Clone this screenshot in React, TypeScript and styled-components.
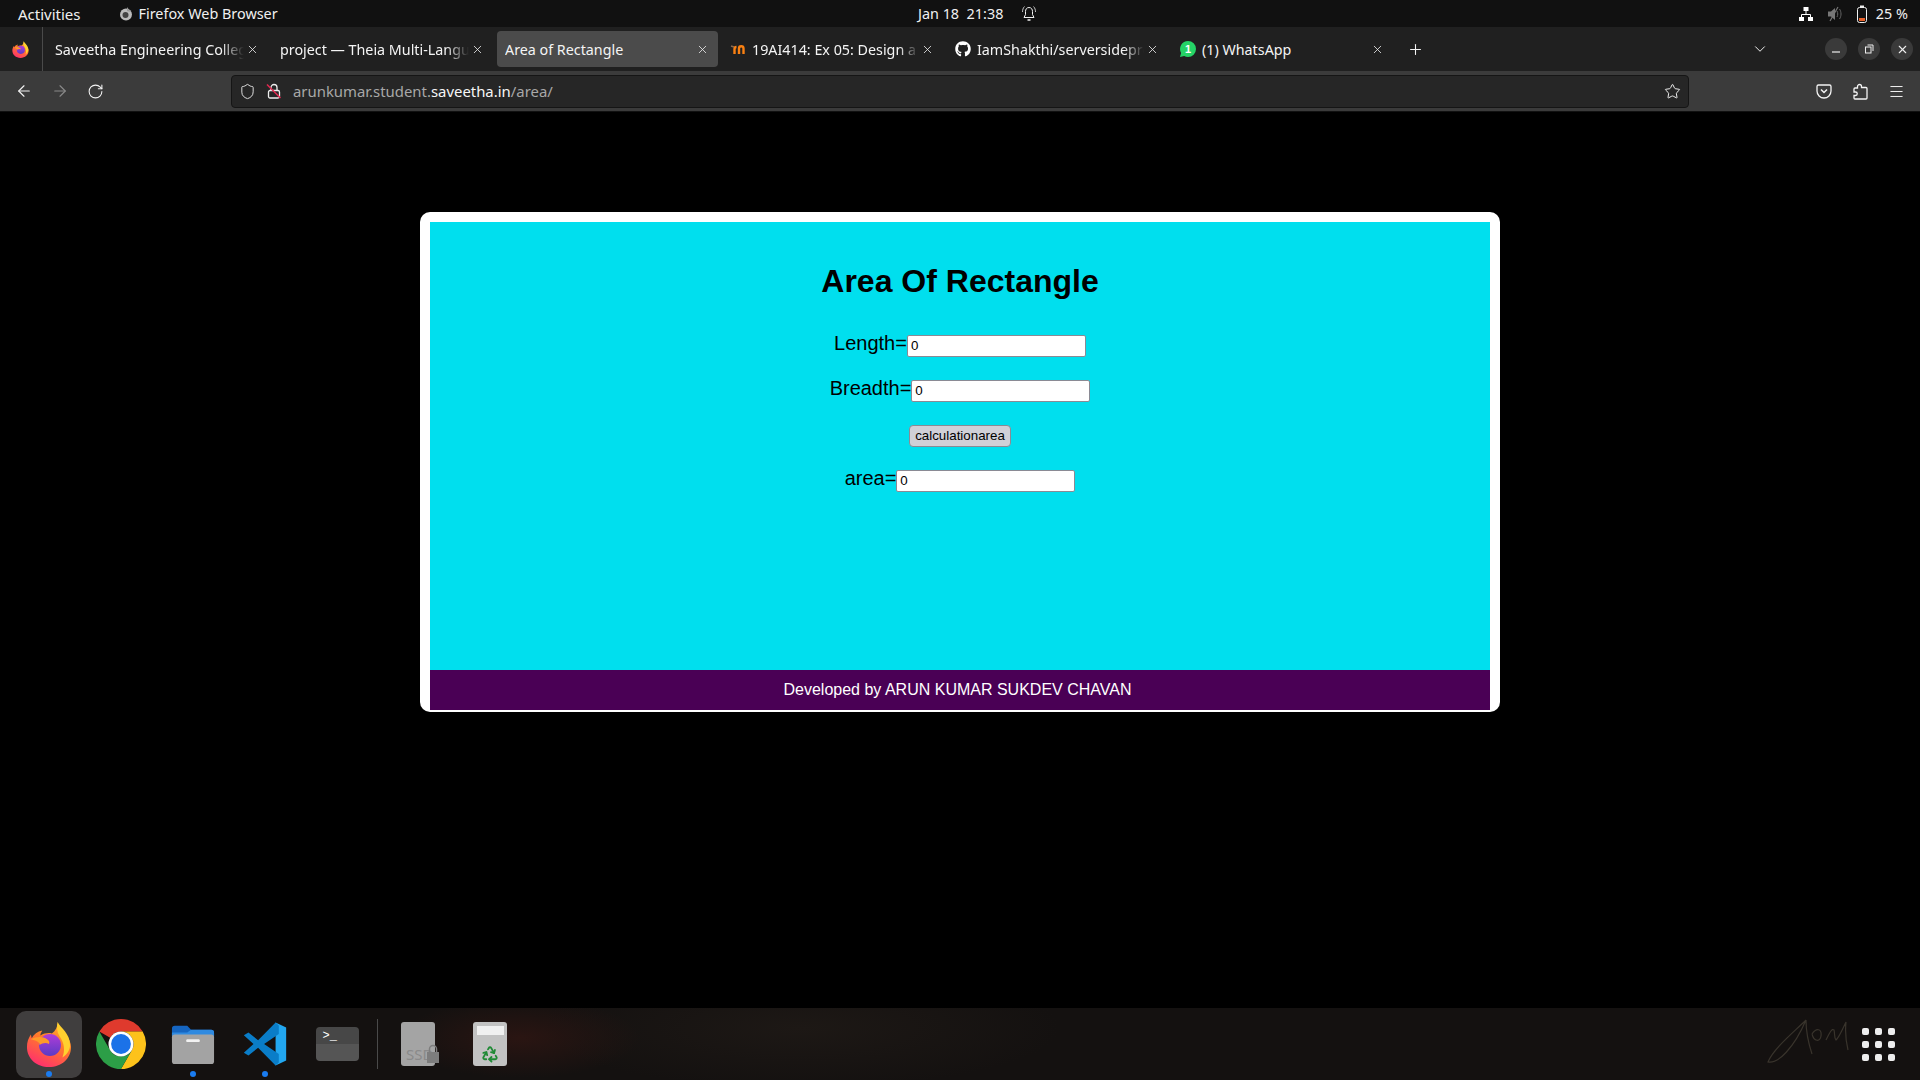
import { createGlobalStyle, styled } from 'styled-components';
import { ArrowLeft, ArrowRight, ChevronDown, Menu, Plus, Recycle, RotateCw, Shield, Star, X } from 'lucide-react';
import { FaGithub } from 'react-icons/fa';

const GlobalStyle = createGlobalStyle`
  html, body {
    margin: 0;
    padding: 0;
    background: #000;
  }
  * {
    box-sizing: border-box;
  }
`;

const uiFont = `"Noto Sans", "Open Sans", sans-serif`;

const Screen = styled.div`
  width: 1920px;
  height: 1080px;
  display: flex;
  flex-direction: column;
  overflow: hidden;
  background: #000;
  font-family: ${uiFont};
`;

/* gnome top bar */
const TopBar = styled.div`
  height: 27px;
  flex: none;
  display: flex;
  align-items: center;
  background: #111;
  color: #f0f0f0;
  font-size: 14.4px;
  padding-left: 18px;
  padding-right: 12px;
`;

const BarLeft = styled.div`
  width: 900px;
  display: flex;
  align-items: center;
`;

const Activities = styled.span`
  font-size: 15px;
`;

const AppName = styled.div`
  display: flex;
  align-items: center;
  gap: 6px;
  margin-left: 38px;
`;

const Clock = styled.div`
  display: flex;
  align-items: center;
  gap: 18px;
  white-space: pre;
`;

const BarRight = styled.div`
  margin-left: auto;
  display: flex;
  align-items: center;
  gap: 13px;
`;

const BatteryLabel = styled.span`
  margin-left: -5px;
`;

/* firefox chrome */
const TabStrip = styled.div`
  height: 44px;
  flex: none;
  display: flex;
  align-items: center;
  background: #202020;
  color: #f4f4f4;
  font-size: 14.3px;
`;

const AppMenu = styled.div`
  width: 43px;
  height: 100%;
  flex: none;
  display: flex;
  align-items: center;
  padding-left: 12px;
  border-right: 1px solid #4a4a4a;
`;

const TabItem = styled.div<{ $active?: boolean }>`
  width: ${props => (props.$active ? '221px' : '225px')};
  height: 36px;
  flex: none;
  display: flex;
  align-items: center;
  gap: 6px;
  padding: 0 9px 0 ${props => (props.$active ? '8px' : '12px')};
  margin-left: ${props => (props.$active ? '4px' : '0')};
  border-radius: 4px;
  background: ${props => (props.$active ? '#4b4b4b' : 'transparent')};
`;

const TabTitle = styled.span<{ $fade?: boolean }>`
  flex: 1;
  min-width: 0;
  white-space: nowrap;
  overflow: hidden;
  margin-right: -4px;
  ${props => props.$fade && 'mask-image: linear-gradient(to right, #000 88%, transparent);'}
`;

const NewTab = styled.div`
  margin-left: 14px;
  display: flex;
  align-items: center;
`;

const TabTools = styled.div`
  margin-left: auto;
  display: flex;
  align-items: center;
  padding-right: 7px;
`;

const ListTabs = styled.div`
  margin-right: 45px;
  display: flex;
`;

const WinButton = styled.div`
  width: 22px;
  height: 22px;
  margin-left: 11px;
  border-radius: 50%;
  background: #3a3a3a;
  display: flex;
  align-items: center;
  justify-content: center;
`;

const NavBar = styled.div`
  height: 41px;
  flex: none;
  display: flex;
  align-items: center;
  background: #3b3b3b;
  border-bottom: 1px solid #111;
  color: #f4f4f4;
  padding-left: 15px;
  padding-right: 15px;
`;

const NavIcons = styled.div`
  width: 216px;
  display: flex;
  align-items: center;
  gap: 18px;
`;

const UrlBar = styled.div`
  width: 1458px;
  height: 33px;
  display: flex;
  align-items: center;
  gap: 10px;
  padding: 0 7px;
  border: 1px solid #151515;
  border-radius: 4px;
  background: #262626;
  font-size: 14.9px;
  color: #a8a8a8;
`;

const UrlText = styled.div`
  flex: 1;
  margin-left: 1px;
`;

const UrlHost = styled.span`
  color: #f6f6f6;
`;

const NavRight = styled.div`
  margin-left: auto;
  display: flex;
  align-items: center;
  gap: 20px;
`;

/* page */
const Viewport = styled.div`
  flex: 1;
  background: #000;
  padding-top: 100px;
`;

const Card = styled.div`
  width: 1080px;
  height: 500px;
  margin-left: 420px;
  padding: 10px 10px 2px;
  background: #fff;
  border-radius: 10px;
  display: flex;
  flex-direction: column;
  font-family: "Liberation Sans", Arial, sans-serif;
`;

const Content = styled.div`
  flex: 1;
  background: #00dfee;
  color: #000;
  text-align: center;
`;

const Heading = styled.h1`
  margin: 41px 0 29px;
  font-size: 32px;
  line-height: 37px;
`;

const FormRow = styled.div`
  height: 45px;
  font-size: 20px;
  line-height: 23px;
  padding-top: 3px;
`;

const NumberInput = styled.input`
  width: 179px;
  height: 22px;
  font-family: "Liberation Sans", Arial, sans-serif;
  font-size: 13.33px;
  padding: 1px 3px;
  border: 1px solid #8a8a94;
  border-radius: 2px;
  background: #fff;
  color: #000;
`;

const SubmitButton = styled.button`
  width: 102px;
  height: 22px;
  padding: 0;
  font-family: "Liberation Sans", Arial, sans-serif;
  font-size: 13.33px;
  color: #000;
  background: #d0d0d7;
  border: 1px solid #8a8a94;
  border-radius: 4px;
`;

const Footer = styled.div`
  height: 40px;
  flex: none;
  background: #4a0055;
  color: #fff;
  font-size: 16px;
  display: flex;
  align-items: center;
  justify-content: center;
  padding-right: 5px;
`;

/* dock */
const Dock = styled.div`
  position: relative;
  height: 72px;
  flex: none;
  display: flex;
  align-items: center;
  padding-left: 16px;
  background:
    radial-gradient(ellipse 120px 40px at 520px 30px, #2a1512, transparent),
    radial-gradient(ellipse 260px 60px at 800px 20px, #1d1815, transparent),
    #141110;
`;

const DockSlot = styled.div<{ $active?: boolean }>`
  position: relative;
  width: 66px;
  height: 67px;
  margin-right: 6px;
  flex: none;
  display: flex;
  align-items: center;
  justify-content: center;
  border-radius: 10px;
  background: ${props => (props.$active ? '#403e3e' : 'transparent')};
`;

const RunningDot = styled.span`
  position: absolute;
  left: 30px;
  bottom: 1px;
  width: 6px;
  height: 6px;
  border-radius: 50%;
  background: #1a7cf0;
`;

const DockDivider = styled.div`
  width: 1px;
  height: 50px;
  flex: none;
  margin: 0 7px 0 1px;
  background: #4a4a4a;
`;

const TerminalIcon = styled.div`
  width: 43px;
  height: 34px;
  border-radius: 4px;
  background: linear-gradient(#474747 50%, #555 50%);
  color: #fff;
  font-family: "Liberation Mono", monospace;
  font-size: 12px;
  line-height: 13px;
  padding: 3px 0 0 7px;
`;

const DriveIcon = styled.div`
  position: relative;
  width: 34px;
  height: 44px;
  border-radius: 3px;
  background: #a4a4a4;
  color: #8a8a8a;
  font-size: 15px;
  padding: 22px 0 0 5px;
  white-space: nowrap;
`;

const DriveLock = styled.div`
  position: absolute;
  right: -5px;
  bottom: -2px;
`;

const TrashIcon = styled.div`
  width: 34px;
  height: 44px;
  border-radius: 3px;
  background: #c2c2c2;
  display: flex;
  flex-direction: column;
  align-items: center;
  padding-top: 4px;
`;

const TrashLid = styled.div`
  width: 27px;
  height: 9px;
  margin-bottom: 10px;
  background: #f0f0f0;
`;

const AppGrid = styled.div`
  position: absolute;
  left: 1862px;
  top: 20px;
  display: grid;
  grid-template-columns: repeat(3, 7px);
  gap: 6px;
`;

const GridDot = styled.span`
  width: 7px;
  height: 7px;
  border-radius: 2px;
  background: #eee;
`;

const Signature = styled.svg`
  position: absolute;
  left: 1760px;
  top: 0;
`;

function FirefoxLogo({ size }: { size: number }) {
  return (
    <svg width={size} height={size} viewBox="0 0 48 48">
      <defs>
        <linearGradient id="ffa" x1="0.8" y1="0" x2="0.3" y2="1">
          <stop offset="0" stopColor="#ffb52e" />
          <stop offset="0.45" stopColor="#ff7a2a" />
          <stop offset="1" stopColor="#ff2f6e" />
        </linearGradient>
        <linearGradient id="ffb" x1="0.5" y1="0" x2="0.5" y2="1">
          <stop offset="0" stopColor="#b13cd8" />
          <stop offset="1" stopColor="#5b3bc4" />
        </linearGradient>
      </defs>
      <path d="M33 1c0 5 4 8 8 13 4 4 6 9 6 13 0 12-10 21-23 21S1 39 1 27c0-5 1.500-9 4-13l1 4c2-4 6-7 11-8-1 2-2 3-2 5 4-2 8-3 12-2 4-3 6-7 6-12z" fill="url(#ffa)" />
      <circle cx="25" cy="25" r="11.500" fill="url(#ffb)" />
      <path d="M5 19c6-3 13-3 17 0 2 1 3 3 2 5-3-2-7-1-10 1 1-3-4-5-9-6z" fill="#ff9a2a" />
      <path d="M33 1c3 6 13 12 13 24 0 5-3 10-8 13 3-7 2-15-3-22-3-5-3-10-2-15z" fill="#ffd02f" />
    </svg>
  );
}

function ChromeLogo() {
  return (
    <svg width="50" height="50" viewBox="0 0 48 48">
      <path d="M24 0A24 24 0 0 1 44.800 12L24 12A12 12 0 0 0 13.600 18L3.200 12A24 24 0 0 1 24 0Z" fill="#df3a2d" />
      <path d="M44.800 12A24 24 0 0 1 24 48L34.400 30A12 12 0 0 0 24 12Z" fill="#fdc21b" />
      <path d="M3.200 12A24 24 0 0 0 24 48L34.400 30A12 12 0 0 1 13.600 30Z" fill="#2c9e47" />
      <circle cx="24" cy="24" r="12" fill="#fff" />
      <circle cx="24" cy="24" r="9.500" fill="#1b72e8" />
    </svg>
  );
}

function FolderLogo() {
  return (
    <svg width="44" height="44" viewBox="0 0 46 46">
      <path d="M1 7a3 3 0 0 1 3-3h13l4 4h21a3 3 0 0 1 3 3v8H1z" fill="#1565c0" />
      <path d="M1 11h16l4-3h21a3 3 0 0 1 3 3v4H1z" fill="#2f8ae0" />
      <rect x="1" y="13" width="44" height="31" rx="3" fill="#a3a3a3" />
      <rect x="16" y="18" width="14" height="3" rx="1" fill="#f2f2f2" />
    </svg>
  );
}

function VscodeLogo() {
  return (
    <svg width="46" height="46" viewBox="0 0 100 100">
      <path d="M73 3 96 14v72L73 97Z" fill="#22a7f0" />
      <path d="M73 3 35 42 14 25 4 31 25 50 4 69 14 75 35 58 73 97 80 90V72L48 50 80 28V10Z" fill="#0a7dc8" />
    </svg>
  );
}

function WhatsappBadge() {
  return (
    <svg width="16" height="16" viewBox="0 0 16 16" style={{ flex: 'none' }}>
      <path d="M8 0a8 8 0 0 1 0 16c-1.500 0-2.700-.4-3.800-1L0 16l1.100-4A8 8 0 0 1 8 0z" fill="#25d366" />
      <text x="8" y="12" textAnchor="middle" fontSize="11" fontWeight="700" fill="#fff" fontFamily="Liberation Sans">1</text>
    </svg>
  );
}

function MoodleMark() {
  return (
    <svg width="16" height="16" viewBox="0 0 16 16" style={{ flex: 'none' }}>
      <path d="M9 13V7.500a2.200 2.200 0 0 1 4.500 0V13M4.500 13V8a2 2 0 0 1 2-2" fill="none" stroke="#f98012" strokeWidth="2.400" />
      <path d="M1 5l3 1" stroke="#8a6a50" strokeWidth="1.500" />
    </svg>
  );
}

function NetworkIcon() {
  return (
    <svg width="16" height="16" viewBox="0 0 16 16">
      <rect x="5.500" y="1" width="5" height="4" fill="#fff" />
      <rect x="1" y="11" width="5" height="4" fill="#fff" />
      <rect x="10" y="11" width="5" height="4" fill="#fff" />
      <path d="M8 5v3M3.500 11V8.500h9V11" fill="none" stroke="#fff" />
    </svg>
  );
}

function BatteryIcon() {
  return (
    <svg width="12" height="18" viewBox="0 0 12 18">
      <rect x="1.500" y="2.500" width="9" height="15" rx="2" fill="none" stroke="#f0f0f0" />
      <rect x="4" y="0.500" width="4" height="2" fill="#f0f0f0" />
      <rect x="3" y="13" width="6" height="3" fill="#e9622a" />
    </svg>
  );
}

function MutedSpeaker() {
  return (
    <svg width="16" height="16" viewBox="0 0 16 16">
      <path d="M1 5.500h3L8 2v12L4 10.500H1z" fill="#777" />
      <path d="M10 5c1 2 1 4 0 6M12.500 3c2 3 2 7 0 10" fill="none" stroke="#666" />
      <path d="M3 15 11 1" stroke="#777" strokeWidth="1.200" />
    </svg>
  );
}

function BellIcon() {
  return (
    <svg width="16" height="18" viewBox="0 0 16 18">
      <path d="M8 2.500c-2.500 0-3.500 2-3.500 4v3L3 12.500h10l-1.500-3v-3c0-2-1-4-3.500-4z" fill="none" stroke="#f0f0f0" />
      <path d="M6.500 15h3" stroke="#f0f0f0" strokeWidth="1.500" />
      <path d="M3.500 1.500C2 3 1.500 5 1.500 7M12.500 1.500C14 3 14.500 5 14.500 7" fill="none" stroke="#f0f0f0" strokeWidth="0.800" />
    </svg>
  );
}

function LockInsecure() {
  return (
    <svg width="16" height="16" viewBox="0 0 16 16" style={{ flex: 'none' }}>
      <rect x="2.500" y="7.500" width="11" height="7.500" rx="1.500" fill="none" stroke="#eee" strokeWidth="1.300" />
      <path d="M5 7.500V4.500a3 3 0 0 1 6 0v3" fill="none" stroke="#eee" strokeWidth="1.300" />
      <path d="M1 1.500 14.500 15" stroke="#e22850" strokeWidth="1.500" />
    </svg>
  );
}

function PocketIcon() {
  return (
    <svg width="16" height="16" viewBox="0 0 16 16">
      <path d="M2.500 2h11A1.500 1.500 0 0 1 15 3.500V8a7 7 0 0 1-14 0V3.500A1.500 1.500 0 0 1 2.500 2z" fill="none" stroke="#f4f4f4" strokeWidth="1.300" />
      <path d="M5 6.500 8 9.500l3-3" fill="none" stroke="#f4f4f4" strokeWidth="1.500" />
    </svg>
  );
}

function ExtensionIcon() {
  return (
    <svg width="16" height="17" viewBox="0 0 16 17">
      <path d="M7.500 1.500a2 2 0 0 1 2 2v1H14a1 1 0 0 1 1 1v9.500a1 1 0 0 1-1 1H3a1 1 0 0 1-1-1v-2.500h1.500a1.700 1.700 0 0 0 0-3.500H2V6a1 1 0 0 1 1-1h2.500V3.500a2 2 0 0 1 2-2z" fill="none" stroke="#f4f4f4" strokeWidth="1.300" />
    </svg>
  );
}

function RestoreIcon() {
  return (
    <svg width="10" height="10" viewBox="0 0 10 10">
      <rect x="1.500" y="3" width="5.500" height="6" fill="none" stroke="#eee" />
      <path d="M3.500 1H9v6" fill="none" stroke="#eee" />
    </svg>
  );
}

function MinimizeIcon() {
  return (
    <svg width="10" height="10" viewBox="0 0 10 10">
      <path d="M1 8h8" stroke="#eee" strokeWidth="1.200" />
    </svg>
  );
}

function Tab({ title, active, icon, fade }: { title: string; active?: boolean; icon?: React.ReactNode; fade?: boolean }) {
  return (
    <TabItem $active={active}>
      {icon}
      <TabTitle $fade={fade}>{title}</TabTitle>
      <X size={13} strokeWidth={1.5} color="#eee" />
    </TabItem>
  );
}

function Field({ label }: { label: string }) {
  return (
    <FormRow>
      {label}
      <NumberInput type="text" defaultValue="0" />
    </FormRow>
  );
}

export default function App() {
  return (
    <Screen>
      <GlobalStyle />
      <TopBar>
        <BarLeft>
          <Activities>Activities</Activities>
          <AppName>
            <svg width="14" height="14" viewBox="0 0 14 14">
              <circle cx="7" cy="7.500" r="6" fill="#bbb" />
              <circle cx="6.500" cy="8" r="3" fill="#444" />
              <path d="M8 0c1 2 3 3 4 5L8 4z" fill="#999" />
            </svg>
            Firefox Web Browser
          </AppName>
        </BarLeft>
        <Clock>
          <span>Jan 18  21:38</span>
          <BellIcon />
        </Clock>
        <BarRight>
          <NetworkIcon />
          <MutedSpeaker />
          <BatteryIcon />
          <BatteryLabel>25 %</BatteryLabel>
        </BarRight>
      </TopBar>
      <TabStrip>
        <AppMenu>
          <FirefoxLogo size={17} />
        </AppMenu>
        <Tab title="Saveetha Engineering College" fade />
        <Tab title="project — Theia Multi-Language IDE" fade />
        <Tab title="Area of Rectangle" active />
        <Tab title="19AI414: Ex 05: Design a Website" fade icon={<MoodleMark />} />
        <Tab title="IamShakthi/serversideprocessing" fade icon={<FaGithub size={16} color="#fff" style={{ flex: 'none' }} />} />
        <Tab title="(1) WhatsApp" icon={<WhatsappBadge />} />
        <NewTab>
          <Plus size={17} strokeWidth={1.5} />
        </NewTab>
        <TabTools>
          <ListTabs>
            <ChevronDown size={18} strokeWidth={1.3} />
          </ListTabs>
          <WinButton><MinimizeIcon /></WinButton>
          <WinButton><RestoreIcon /></WinButton>
          <WinButton><X size={13} strokeWidth={2} color="#eee" /></WinButton>
        </TabTools>
      </TabStrip>
      <NavBar>
        <NavIcons>
          <ArrowLeft size={18} strokeWidth={1.5} />
          <ArrowRight size={18} strokeWidth={1.5} color="#8a8a8a" />
          <RotateCw size={17} strokeWidth={1.5} />
        </NavIcons>
        <UrlBar>
          <Shield size={17} strokeWidth={1.3} color="#eee" />
          <LockInsecure />
          <UrlText>
            arunkumar.student.<UrlHost>saveetha.in</UrlHost>/area/
          </UrlText>
          <Star size={17} strokeWidth={1.4} color="#eee" />
        </UrlBar>
        <NavRight>
          <PocketIcon />
          <ExtensionIcon />
          <Menu size={17} strokeWidth={1.4} />
        </NavRight>
      </NavBar>
      <Viewport>
        <Card>
          <Content>
            <Heading>Area Of Rectangle</Heading>
            <Field label="Length=" />
            <Field label="Breadth=" />
            <FormRow>
              <SubmitButton type="button">calculationarea</SubmitButton>
            </FormRow>
            <Field label="area=" />
          </Content>
          <Footer>Developed by ARUN KUMAR SUKDEV CHAVAN</Footer>
        </Card>
      </Viewport>
      <Dock>
        <DockSlot $active>
          <FirefoxLogo size={46} />
          <RunningDot />
        </DockSlot>
        <DockSlot>
          <ChromeLogo />
        </DockSlot>
        <DockSlot>
          <FolderLogo />
          <RunningDot />
        </DockSlot>
        <DockSlot>
          <VscodeLogo />
          <RunningDot />
        </DockSlot>
        <DockSlot>
          <TerminalIcon>&gt;_</TerminalIcon>
        </DockSlot>
        <DockDivider />
        <DockSlot>
          <DriveIcon>
            SSD
            <DriveLock>
              <svg width="14" height="20" viewBox="0 0 14 20">
                <rect x="1" y="8" width="12" height="11" fill="#7d7d7d" />
                <path d="M3.500 8V5a3.500 3.500 0 0 1 7 0v3" fill="none" stroke="#7d7d7d" strokeWidth="1.500" />
              </svg>
            </DriveLock>
          </DriveIcon>
        </DockSlot>
        <DockSlot>
          <TrashIcon>
            <TrashLid />
            <Recycle size={18} color="#1f8a35" strokeWidth={2.4} />
          </TrashIcon>
        </DockSlot>
        <Signature width="110" height="60" viewBox="0 0 110 60">
          <path d="M46 12C34 24 14 40 8 54c10 2 26-14 38-42 0 12 2 22 6 34M52 26c4-6 10-6 9 2-1 6-7 6-9-2M66 32c4-8 6-12 8-10 1 4 0 8 2 10 4-4 6-10 10-18-1 10 0 20 2 28" fill="none" stroke="#39342c" strokeWidth="1.200" />
        </Signature>
        <AppGrid>
          {Array.from({ length: 9 }).map((_, index) => (
            <GridDot key={index} />
          ))}
        </AppGrid>
      </Dock>
    </Screen>
  );
}
